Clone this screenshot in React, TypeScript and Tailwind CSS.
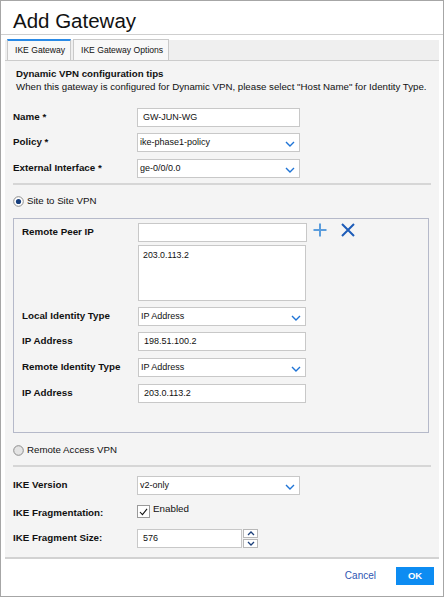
import React from "react";

const Chevron = () => (
  <svg width="10" height="6" viewBox="0 0 10 6" className="shrink-0">
    <path d="M1 1 L5 5 L9 1" fill="none" stroke="#1f74d6" strokeWidth="1.4" />
  </svg>
);

const Radio = ({ checked }: { checked?: boolean }) => (
  <svg width="11" height="11" viewBox="0 0 11 11" className="shrink-0">
    <circle cx="5.5" cy="5.5" r="4.8" fill={checked ? "#ffffff" : "#e4e4e4"} stroke="#8c8c8c" strokeWidth="1" />
    {checked && <circle cx="5.5" cy="5.5" r="2.6" fill="#173e7c" />}
  </svg>
);

const TextInput = ({ value, w }: { value: string; w: string }) => (
  <div className={`${w} h-[19px] bg-white border border-[#c8c8c8] flex items-center pl-[5px] text-[9px]`}>
    {value}
  </div>
);

const Select = ({ value, w }: { value: string; w: string }) => (
  <div className={`${w} h-[19px] bg-white border border-[#c8c8c8] flex items-center justify-between pl-[2px] pr-[4px] text-[9px]`}>
    <span>{value}</span>
    <span className="pt-[3px]">
      <Chevron />
    </span>
  </div>
);

const Label = ({ children, w }: { children: React.ReactNode; w: string }) => (
  <div className={`${w} shrink-0 pt-[2px] text-[9.8px] font-bold leading-[13px]`}>{children}</div>
);

export default function App() {
  return (
    <div className="w-[444px] h-[597px] bg-white border border-[#a6a6a6] flex flex-col text-[#111] font-['Liberation_Sans',Arial,sans-serif]">
      <div className="h-[34px] shrink-0 border-b border-[#cfcfcf] pl-[12px] pt-[10px]">
        <h1 className="text-[20.5px] leading-[20px]">Add Gateway</h1>
      </div>

      <div className="mx-[4px] mt-[5px] h-[519px] shrink-0 bg-[#f4f4f4] border-b-2 border-[#d2d2d2] flex flex-col">
        <div className="h-[21px] shrink-0 bg-[#efefef] border-b border-[#cccccc] flex items-end gap-[2px] pl-[2px] text-[8.6px]">
          <div className="w-[64px] h-[21px] bg-[#f8f8f8] border-t-2 border-x border-t-[#2a8ae6] border-x-[#c9c9c9] flex items-center pl-[7px]">
            IKE Gateway
          </div>
          <div className="w-[96px] h-[21px] bg-[#f8f8f8] border-t border-x border-[#c9c9c9] flex items-center pl-[7px]">
            IKE Gateway Options
          </div>
        </div>

        <div className="px-[8px] flex flex-col">
          <div className="mt-[6px] ml-[3px] text-[9.7px] leading-[13px]">
            <div className="font-bold">Dynamic VPN configuration tips</div>
            <div>When this gateway is configured for Dynamic VPN, please select "Host Name" for Identity Type.</div>
          </div>

          <div className="mt-[15px] flex">
            <Label w="w-[124px]">Name *</Label>
            <TextInput value="GW-JUN-WG" w="w-[163px]" />
          </div>
          <div className="mt-[6px] flex">
            <Label w="w-[124px]">Policy *</Label>
            <Select value="ike-phase1-policy" w="w-[163px]" />
          </div>
          <div className="mt-[7px] flex">
            <Label w="w-[124px]">External Interface *</Label>
            <Select value="ge-0/0/0.0" w="w-[163px]" />
          </div>

          <div className="mt-[5px] h-[2px] bg-[#d6d6d6]" />

          <div className="mt-[9px] h-[14px] flex items-center gap-[3px] text-[9.7px]">
            <Radio checked />
            <span>Site to Site VPN</span>
          </div>

          <div className="mt-[10px] w-[416px] border border-[#b5b9c9] pt-[4px] pb-[29px] pl-[8px] flex flex-col">
            <div className="flex">
              <Label w="w-[116px]">Remote Peer IP</Label>
              <TextInput value="" w="w-[169px]" />
              <svg width="14" height="14" viewBox="0 0 14 14" className="ml-[6px] shrink-0">
                <path d="M7 0.5 V13.5 M0.5 7 H13.5" stroke="#5b9ddc" strokeWidth="2" />
              </svg>
              <svg width="14" height="14" viewBox="0 0 14 14" className="ml-[14px] shrink-0">
                <path d="M1 1 L13 13 M13 1 L1 13" stroke="#1d5cb8" strokeWidth="2" />
              </svg>
            </div>
            <div className="mt-[3px] ml-[116px] w-[168px] h-[56px] bg-white border border-[#c8c8c8] pl-[4px] pt-[4px] text-[8.8px] leading-[11px]">
              203.0.113.2
            </div>
            <div className="mt-[6px] flex">
              <Label w="w-[116px]">Local Identity Type</Label>
              <Select value="IP Address" w="w-[168px]" />
            </div>
            <div className="mt-[6px] flex">
              <Label w="w-[116px]">IP Address</Label>
              <TextInput value="198.51.100.2" w="w-[168px]" />
            </div>
            <div className="mt-[7px] flex">
              <Label w="w-[116px]">Remote Identity Type</Label>
              <Select value="IP Address" w="w-[168px]" />
            </div>
            <div className="mt-[7px] flex">
              <Label w="w-[116px]">IP Address</Label>
              <TextInput value="203.0.113.2" w="w-[168px]" />
            </div>
          </div>

          <div className="mt-[10px] h-[14px] flex items-center gap-[3px] text-[9.7px]">
            <Radio />
            <span>Remote Access VPN</span>
          </div>

          <div className="mt-[8px] h-[2px] bg-[#d6d6d6]" />

          <div className="mt-[9px] flex">
            <Label w="w-[124px]">IKE Version</Label>
            <Select value="v2-only" w="w-[163px]" />
          </div>
          <div className="mt-[9px] flex">
            <Label w="w-[124px]">IKE Fragmentation:</Label>
            <div className="w-[13px] h-[13px] mt-px bg-white border border-[#9a9a9a] flex items-center justify-center">
              <svg width="9" height="8" viewBox="0 0 10 9">
                <path d="M1 4.5 L3.8 7.5 L9 1" fill="none" stroke="#111" strokeWidth="1.2" />
              </svg>
            </div>
            <span className="ml-[3px] -mt-[2px] text-[9.8px] leading-[13px]">Enabled</span>
          </div>
          <div className="mt-[10px] flex">
            <Label w="w-[124px]">IKE Fragment Size:</Label>
            <TextInput value="576" w="w-[105px]" />
            <div className="ml-[1px] w-[15px] h-[19px] flex flex-col gap-px">
              <div className="h-[9px] bg-white border border-[#b8b8b8] flex items-center justify-center">
                <svg width="8" height="5" viewBox="0 0 8 5">
                  <path d="M1 4 L4 1 L7 4" fill="none" stroke="#1b3f7a" strokeWidth="1.3" />
                </svg>
              </div>
              <div className="h-[9px] bg-white border border-[#b8b8b8] flex items-center justify-center">
                <svg width="8" height="5" viewBox="0 0 8 5">
                  <path d="M1 1 L4 4 L7 1" fill="none" stroke="#1b3f7a" strokeWidth="1.3" />
                </svg>
              </div>
            </div>
          </div>
        </div>
      </div>

      <div className="flex-1 flex items-start justify-end gap-[20px] pt-[8px] pr-[9px]">
        <span className="mt-[3px] text-[10px] leading-[12px] text-[#2f55b2]">Cancel</span>
        <div className="w-[38px] h-[18px] bg-[#0d8cf2] text-white text-[9.5px] font-bold flex items-center justify-center">
          OK
        </div>
      </div>
    </div>
  );
}
